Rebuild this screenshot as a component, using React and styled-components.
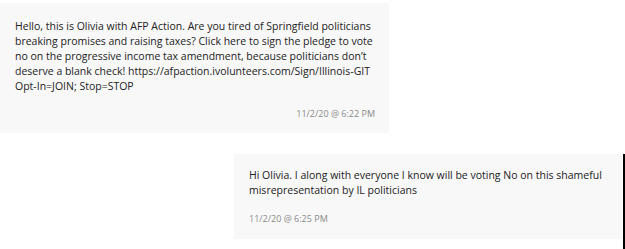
import styled, { createGlobalStyle } from 'styled-components';

const GlobalStyle = createGlobalStyle`
    body {
        margin: 0;
        background-color: #FFFFFF;
        font-family: 'Open Sans', 'Noto Sans', sans-serif;
    }
`;

const messages = [
    {
        id: 1,
        mine: false,
        text: 'Hello, this is Olivia with AFP Action. Are you tired of Springfield politicians breaking promises and raising taxes? Click here to sign the pledge to vote no on the progressive income tax amendment, because politicians don’t deserve a blank check! https://afpaction.ivolunteers.com/Sign/Illinois-GIT Opt-In=JOIN; Stop=STOP',
        time: '11/2/20 @ 6:22 PM'
    },
    {
        id: 2,
        mine: true,
        text: 'Hi Olivia. I along with everyone I know will be voting No on this shameful misrepresentation by IL politicians',
        time: '11/2/20 @ 6:25 PM'
    }
];

export default function App() {
    return (
        <>
            <GlobalStyle />
            <Thread>
                {messages.map(({ id, mine, text, time }) => (
                    <Row key={id} mine={mine}>
                        <Bubble mine={mine}>
                            <Text>{text}</Text>
                            <Time mine={mine}>{time}</Time>
                        </Bubble>
                    </Row>
                ))}
            </Thread>
        </>
    );
}

// styled components
const Thread = styled.div`
    width: 625px;
    height: 249px;
    overflow: hidden;
    display: flex;
    flex-direction: column;
    padding-top: 3px;
    box-sizing: border-box;
    gap: 21px;
`;
const Row = styled.div`
    display: flex;
    justify-content: ${props => props.mine ? 'flex-end' : 'flex-start'};
    flex-grow: ${props => props.mine ? 1 : 0};
    align-items: flex-start;
    border-right: ${props => props.mine ? '2px solid #000000' : 'none'};
    padding-right: ${props => props.mine ? '1px' : '0'};
`;
const Bubble = styled.div`
    width: ${props => props.mine ? '388px' : '389px'};
    box-sizing: border-box;
    background-color: #F8F8F8;
    padding: ${props => props.mine ? '14px 10px 13px 15px' : '16px 10px 12px 15px'};
    display: flex;
    flex-direction: column;
`;
const Text = styled.p`
    margin: 0;
    font-size: 10.5px;
    line-height: 15px;
    color: #222222;
`;
const Time = styled.span`
    margin-top: ${props => props.mine ? '14px' : '13px'};
    margin-right: ${props => props.mine ? '0' : '4px'};
    font-size: 9px;
    line-height: 14px;
    color: #8A8A8A;
    text-align: ${props => props.mine ? 'left' : 'right'};
`;
